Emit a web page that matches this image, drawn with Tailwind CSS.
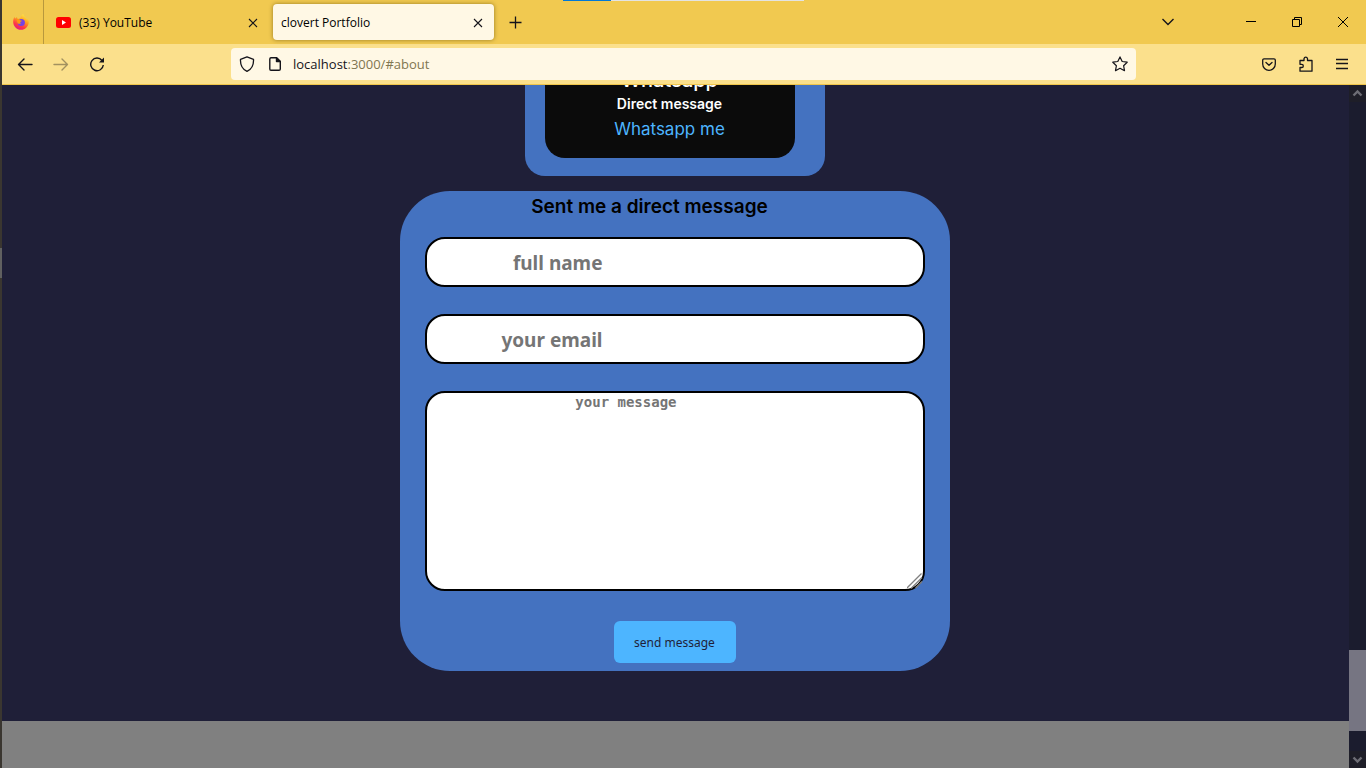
<!DOCTYPE html>
<html lang="en">
<head>
<meta charset="utf-8">
<title>clovert Portfolio</title>
<script src="https://cdn.jsdelivr.net/npm/@tailwindcss/browser@4"></script>
</head>
<body class="flex h-screen flex-col overflow-hidden bg-[#1f1f38] font-['Open_Sans','Noto_Sans',sans-serif] text-black">
<div class="flex min-h-0 flex-1">
<div class="flex w-[2px] shrink-0 flex-col bg-[#3a3630]"><div class="mt-[248px] h-[30px] bg-[#606060]"></div></div>
<div class="flex min-w-0 flex-1 flex-col">
  <header class="relative shrink-0 border-b border-[#f0c64a]">
    <div class="absolute top-0 left-[561px] flex h-px w-[241px] bg-[#e3e3e3]"><div class="w-12 bg-[#0078d7]"></div></div>
    <div class="flex h-11 items-center bg-[#f1c950]">
      <button aria-label="Firefox View" class="flex h-11 w-[42px] items-center justify-center border-r border-[#b8983d] pr-1">
        <svg class="size-4" viewBox="0 0 16 16">
          <defs><linearGradient id="fx" x1=".8" y1="0" x2=".3" y2="1"><stop offset="0" stop-color="#fff44f"/><stop offset=".4" stop-color="#ffa11e"/><stop offset=".75" stop-color="#ff3647"/><stop offset="1" stop-color="#e31587"/></linearGradient></defs>
          <path d="M15.3 6.200c-.4-1-1.100-2-1.700-2.300.5 1 .7 1.900.8 2.600C13.500 4.200 11.700 3.200 10.500 1c-.2-.3-.3-.6-.3-1C8.200 1.100 7.500 3.100 7.400 4.200c-.8 0-1.700.3-2.400.7-.6-.4-.9-1-1-1.900-1 .5-1.700 1.300-2 1.700-.3-.4-.3-1.600-.2-1.900C.8 3.700.2 5.700.2 8c0 4.300 3.500 7.800 7.800 7.800s7.800-3.500 7.800-7.800c0-.6-.2-1.200-.5-1.800z" fill="url(#fx)"/>
          <circle cx="8.300" cy="8.500" r="3.600" fill="#7542e5"/>
          <path d="M3.500 5.500c1.500-.7 2.700-.4 3.500.4.700.7 1.500.6 2 .8-.3.9-1.500.6-1.800 1.200-.2.8.3 1.300 1 1.300-1 1-3 .8-3.700-.3-.6-1.300-.4-2.500-1-3.400z" fill="#ff980e"/>
        </svg>
      </button>
      <div class="flex h-11 w-[229px] items-center pt-px pr-[11px] pl-3">
        <svg class="mr-2 h-[11px] w-[15px]" viewBox="0 0 15 11"><rect width="15" height="11" rx="2.500" fill="red"/><path d="M6 3l4 2.500L6 8z" fill="#fff"/></svg>
        <span class="flex-1 text-xs">(33) YouTube</span>
        <button aria-label="Close tab" class="p-1"><svg class="size-[10px]" viewBox="0 0 10 10" stroke="#15141a" stroke-width="1.100"><path d="M1 1l8 8M9 1L1 9"/></svg></button>
      </div>
      <div class="flex h-9 w-[221px] items-center rounded bg-[#fff8e5] pt-px pr-[7px] pl-2 shadow-[0_0_4px_rgba(90,70,0,0.6)]">
        <span class="flex-1 text-xs">clovert Portfolio</span>
        <button aria-label="Close tab" class="p-1"><svg class="size-[10px]" viewBox="0 0 10 10" stroke="#15141a" stroke-width="1.100"><path d="M1 1l8 8M9 1L1 9"/></svg></button>
      </div>
      <button aria-label="New tab" class="ml-[14px]"><svg class="size-[14px]" viewBox="0 0 14 14" stroke="#15141a" stroke-width="1.300"><path d="M7.500 1.500v12M1.500 7.500h12"/></svg></button>
      <div class="ml-auto flex items-center">
        <button aria-label="List all tabs" class="mr-[71px]"><svg class="h-3 w-[14px]" viewBox="0 0 14 12" fill="none" stroke="#15141a" stroke-width="1.400"><path d="M1.500 3L7 8.500 12.500 3"/></svg></button>
        <button aria-label="Minimize" class="mr-9"><svg class="size-[10px]" viewBox="0 0 10 10" stroke="#000"><path d="M0 4.500h10"/></svg></button>
        <button aria-label="Restore" class="mr-9"><svg class="size-[10px]" viewBox="0 0 10 10" fill="none" stroke="#000"><path d="M.5 2.500h7v7h-7zM2.500 2.500v-2h7v7h-2"/></svg></button>
        <button aria-label="Close" class="mr-[18px]"><svg class="size-[10px]" viewBox="0 0 10 10" stroke="#000"><path d="M0 0l10 10M10 0L0 10"/></svg></button>
      </div>
    </div>
    <div class="flex h-10 items-center bg-[#fbe08c] pl-[15px]">
      <button aria-label="Back" class="mr-5"><svg class="size-4" viewBox="0 0 16 16" fill="none" stroke="#15141a" stroke-width="1.400" stroke-linecap="round" stroke-linejoin="round"><path d="M15 8.500H1.500M7 3L1.500 8.500 7 14"/></svg></button>
      <button aria-label="Forward" class="mr-5" disabled><svg class="size-4" viewBox="0 0 16 16" fill="none" stroke="#a2915f" stroke-width="1.400" stroke-linecap="round" stroke-linejoin="round"><path d="M1 8.500h13.500M9 3l5.500 5.500L9 14"/></svg></button>
      <button aria-label="Reload"><svg class="size-4" viewBox="0 0 16 16" fill="none" stroke="#15141a" stroke-width="1.400"><path d="M13 4.500A6.300 6.300 0 1 0 14.300 9"/><path d="M15 1.500V6.500H10z" fill="#15141a" stroke="none"/></svg></button>
      <div class="ml-[126px] flex h-8 flex-1 items-center rounded bg-[#fff8e5] px-2">
        <svg class="mr-[14px] size-4 shrink-0" viewBox="0 0 16 16" fill="none" stroke="#15141a" stroke-width="1.300" stroke-linejoin="round"><path d="M8 .8l6.500 2.500c.3 5.500-1.600 9.700-6.500 12C3.100 13 1.200 8.800 1.500 3.300z"/></svg>
        <svg class="mr-3 h-[14px] w-3 shrink-0" viewBox="0 0 12 14" fill="none" stroke="#15141a" stroke-width="1.400" stroke-linejoin="round"><path d="M2 .8h5.500L11.300 4.500V12a1.300 1.300 0 0 1-1.300 1.300H2A1.300 1.300 0 0 1 .8 12V2A1.300 1.300 0 0 1 2 .8z"/><path d="M7.500.8v3.700h3.800z" fill="#15141a"/></svg>
        <a href="#about" class="flex-1 pt-px text-[13px] text-[#7f7650]"><span class="text-[#15141a]">localhost</span>:3000/#about</a>
        <button aria-label="Bookmark"><svg class="size-4" viewBox="0 0 16 16" fill="none" stroke="#15141a" stroke-width="1.200" stroke-linejoin="round"><path d="M8 .9l2.200 4.600 5 .7-3.600 3.500.9 5L8 12.300l-4.500 2.400.9-5L.8 6.200l5-.7z"/></svg></button>
      </div>
      <div class="flex items-center gap-[22px] pr-[18px] pl-[126px]">
        <button aria-label="Pocket"><svg class="h-[13px] w-[14px]" viewBox="0 0 14 13" fill="none" stroke="#15141a" stroke-width="1.300" stroke-linecap="round" stroke-linejoin="round"><path d="M2 .8h10a1.300 1.300 0 0 1 1.300 1.300V6A6.300 6.300 0 0 1 .7 6V2.100A1.300 1.300 0 0 1 2 .8zM4 4.500l3 2.800 3-2.800"/></svg></button>
        <button aria-label="Extensions"><svg class="size-4" viewBox="0 0 16 16" fill="none" stroke="#15141a" stroke-width="1.300" stroke-linejoin="round"><path d="M2 15.200V11.500h1.700a1.600 1.600 0 0 0 0-3.200H2V4.500h4V2.600a1.800 1.800 0 0 1 3.500 0v1.900H14v10.700z"/></svg></button>
        <button aria-label="Menu"><svg class="h-3 w-3" viewBox="0 0 12 12" stroke="#15141a" stroke-width="1.300"><path d="M0 1.500h12M0 5.500h12M0 10.500h12"/></svg></button>
      </div>
    </div>
  </header>
  <div class="flex min-h-0 flex-1">
    <main class="flex min-w-0 flex-1 flex-col justify-end overflow-hidden font-['Inter','Open_Sans',sans-serif]">
      <div class="flex shrink-0 flex-col items-center pr-0.5 pb-[50px]">
        <section class="mb-[15px] w-[300px] rounded-[20px] bg-[#4472c0] pr-[30px] pb-[18px] pl-5">
          <div class="rounded-[20px] bg-[#0b0b0b] pt-3 pb-4 text-center">
            <h4 class="text-xl leading-6 font-medium text-white">Whatsapp</h4>
            <h5 class="text-sm leading-6 font-semibold text-white">Direct message</h5>
            <a href="#contact" class="block text-[17px] leading-[26px] text-[#4db5ff]">Whatsapp me</a>
          </div>
        </section>
        <form class="flex w-[550px] flex-col items-center rounded-[50px] bg-[#4472c0] px-[25px] pb-2">
          <h3 class="mb-[14px] pr-[50px] text-[19px] leading-8 font-semibold">Sent me a direct message</h3>
          <input type="text" aria-label="full name" placeholder="full name" class="mb-[27px] h-[50px] w-full rounded-[20px] border-2 border-black bg-white pt-px pr-[320px] text-right font-['Noto_Sans',sans-serif] text-[19px] font-bold placeholder:text-[#757575]">
          <input type="email" aria-label="your email" placeholder="your email" class="mb-[27px] h-[50px] w-full rounded-[20px] border-2 border-black bg-white pt-px pr-[320px] text-right font-['Noto_Sans',sans-serif] text-[19px] font-bold placeholder:text-[#757575]">
          <div class="relative mb-[30px] w-full">
            <textarea aria-label="your message" placeholder="your message" class="block h-[200px] w-full resize-none rounded-[20px] border-2 border-black bg-white pr-[246px] text-right font-['DejaVu_Sans_Mono',monospace] text-sm leading-[18px] font-bold placeholder:text-[#757575]"></textarea>
            <svg class="pointer-events-none absolute right-0.5 bottom-0.5 size-4" viewBox="0 0 16 16" stroke="#808080" stroke-width="1.300" aria-hidden="true"><path d="M0 15L14.500.5M4 15.500L15 4.500M8.500 15L15 8.500"/></svg>
          </div>
          <button type="button" class="h-[42px] w-[122px] rounded-md bg-[#4db5ff] pt-px font-['Noto_Sans',sans-serif] text-xs text-[#1f1f38]">send message</button>
        </form>
      </div>
      <footer class="h-[47px] w-full shrink-0 bg-[#808080]"></footer>
    </main>
    <div class="flex w-[17px] shrink-0 flex-col bg-[#1b1c2e]" aria-hidden="true">
      <svg class="h-[17px] w-[17px] bg-[#1e1e28]" viewBox="0 0 17 17" fill="none" stroke="#6d6d75" stroke-width="2.400"><path d="M4.500 10.500l4-4 4 4"/></svg>
      <div class="flex-1"></div>
      <div class="h-[81px] bg-[#767582]"></div>
      <div class="h-5"></div>
      <svg class="h-[17px] w-[17px] bg-[#1e1e28]" viewBox="0 0 17 17" fill="none" stroke="#6d6d75" stroke-width="2.400"><path d="M4.500 6.500l4 4 4-4"/></svg>
    </div>
  </div>
</div>
</div>
</body>
</html>
